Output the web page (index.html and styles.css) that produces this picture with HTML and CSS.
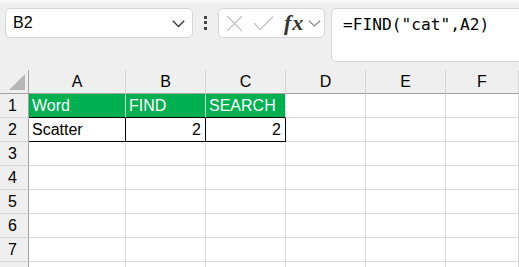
FILE: index.html
```html
<html lang="en">
  <head>
    <meta charset="UTF-8" />
    <title>FIND vs SEARCH</title>
    <link rel="stylesheet" href="styles.css">
  </head>
  <body>
    <div class="toolbar">
      <div class="name-box">
        <span class="cell-ref">B2</span>
        <svg class="chevron" width="13" height="8" viewBox="0 0 13 8">
          <polyline points="0.8,0.8 6.5,6.5 12.2,0.8" fill="none" stroke="#333" stroke-width="1.3" />
        </svg>
      </div>
      <div class="grip">
        <span class="dot"></span>
        <span class="dot"></span>
        <span class="dot"></span>
      </div>
      <div class="fx-box">
        <svg class="icon" width="17" height="17" viewBox="0 0 17 17">
          <path d="M1 1 L16 16 M16 1 L1 16" stroke="#c4c4c4" stroke-width="1.3" fill="none" />
        </svg>
        <svg class="icon" width="21" height="15" viewBox="0 0 21 15">
          <polyline points="1,7 7,13.5 20,0.8" stroke="#c4c4c4" stroke-width="1.3" fill="none" />
        </svg>
        <span class="fx">fx</span>
        <svg class="small-chevron" width="13" height="7" viewBox="0 0 13 7">
          <polyline points="0.8,0.8 6.5,6 12.2,0.8" fill="none" stroke="#8a8a8a" stroke-width="1.2" />
        </svg>
      </div>
      <div class="formula">=FIND("cat",A2)</div>
    </div>

    <div class="sheet">
      <div class="corner">
        <svg width="16" height="16" viewBox="0 0 16 16">
          <polygon points="0,16 16,16 16,0" fill="#b6b6b6" />
        </svg>
      </div>
      <div class="col-head">A</div>
      <div class="col-head">B</div>
      <div class="col-head">C</div>
      <div class="col-head">D</div>
      <div class="col-head">E</div>
      <div class="col-head">F</div>

      <div class="row-head">1</div>
      <div class="cell head-cell">Word</div>
      <div class="cell head-cell">FIND</div>
      <div class="cell head-cell last">SEARCH</div>
      <div class="cell"></div>
      <div class="cell"></div>
      <div class="cell"></div>

      <div class="row-head">2</div>
      <div class="cell data">Scatter</div>
      <div class="cell data num">2</div>
      <div class="cell data num">2</div>
      <div class="cell"></div>
      <div class="cell"></div>
      <div class="cell"></div>

      <div class="row-head">3</div>
      <div class="cell"></div><div class="cell"></div><div class="cell"></div><div class="cell"></div><div class="cell"></div><div class="cell"></div>
      <div class="row-head">4</div>
      <div class="cell"></div><div class="cell"></div><div class="cell"></div><div class="cell"></div><div class="cell"></div><div class="cell"></div>
      <div class="row-head">5</div>
      <div class="cell"></div><div class="cell"></div><div class="cell"></div><div class="cell"></div><div class="cell"></div><div class="cell"></div>
      <div class="row-head">6</div>
      <div class="cell"></div><div class="cell"></div><div class="cell"></div><div class="cell"></div><div class="cell"></div><div class="cell"></div>
      <div class="row-head">7</div>
      <div class="cell"></div><div class="cell"></div><div class="cell"></div><div class="cell"></div><div class="cell"></div><div class="cell"></div>
      <div class="row-head"></div>
      <div class="cell"></div><div class="cell"></div><div class="cell"></div><div class="cell"></div><div class="cell"></div><div class="cell"></div>
    </div>
  </body>
</html>
```

FILE: styles.css
```css
body {
  margin: 0;
  width: 519px;
  height: 267px;
  overflow: hidden;
  background-color: #efefef;
  font-family: "Liberation Sans", Arial, sans-serif;
  color: #000;
}
.toolbar {
  display: flex;
  align-items: flex-start;
  height: 70px;
  box-sizing: border-box;
  padding: 8px 0 0 5px;
  background: linear-gradient(#fbfbfb, #efefef 4px);
}
.name-box {
  display: flex;
  align-items: center;
  justify-content: space-between;
  width: 188px;
  height: 30px;
  box-sizing: border-box;
  padding: 0 7px 0 7px;
  background-color: #fff;
  border: 1px solid #d6d6d6;
  border-radius: 5px;
}
.cell-ref {
  font-size: 16px;
}
.chevron {
  margin-top: 1px;
}
.grip {
  display: flex;
  flex-direction: column;
  align-items: center;
  gap: 2.3px;
  width: 25px;
  padding-top: 8px;
}
.dot {
  width: 3px;
  height: 3px;
  background-color: #444;
}
.fx-box {
  display: flex;
  align-items: center;
  width: 107px;
  height: 30px;
  box-sizing: border-box;
  padding-left: 7px;
  background-color: #fff;
  border: 1px solid #d6d6d6;
  border-radius: 5px;
}
.fx-box .icon:nth-child(2) {
  margin-left: 10px;
}
.fx {
  margin-left: 10px;
  font-family: "Liberation Serif", "Times New Roman", serif;
  font-style: italic;
  font-weight: bold;
  font-size: 22px;
  letter-spacing: 1px;
  color: #333;
  line-height: 20px;
}
.small-chevron {
  margin-left: 4px;
  margin-top: 1px;
}
.formula {
  flex: 1;
  height: 54px;
  margin-left: 6px;
  margin-right: -10px;
  box-sizing: border-box;
  padding: 6px 0 0 11px;
  background-color: #fff;
  border: 1px solid #d6d6d6;
  border-radius: 5px;
  font-family: "DejaVu Sans Mono", "Liberation Mono", monospace;
  font-size: 16.2px;
  line-height: 20px;
}
.sheet {
  display: grid;
  grid-template-columns: 29px 97px 80px 80px 80px 80px 1fr;
  grid-auto-rows: 24px;
}
.sheet > div {
  box-sizing: border-box;
}
.corner {
  display: flex;
  align-items: flex-end;
  justify-content: flex-end;
  padding: 0 3px 3px 0;
  border-right: 1px solid #a3a3a3;
  border-bottom: 1px solid #a3a3a3;
}
.col-head {
  display: flex;
  align-items: center;
  justify-content: center;
  font-size: 16px;
  border-right: 1px solid #d4d4d4;
  border-bottom: 1px solid #a3a3a3;
}
.row-head {
  display: flex;
  align-items: center;
  justify-content: center;
  padding-right: 3px;
  font-size: 16px;
  border-right: 1px solid #a3a3a3;
  border-bottom: 1px solid #d4d4d4;
}
.cell {
  display: flex;
  align-items: center;
  padding: 0 4px 0 3px;
  font-size: 16px;
  white-space: nowrap;
  background-color: #fff;
  border-right: 1px solid #d9d9d9;
  border-bottom: 1px solid #d9d9d9;
}
.head-cell {
  color: #fff;
  background-color: #00b050;
  border-right-color: #bfe8cf;
  border-bottom-color: #000;
}
.head-cell.last {
  border-right-color: #d9d9d9;
}
.data {
  border-right-color: #000;
  border-bottom-color: #000;
}
.num {
  justify-content: flex-end;
}
```
